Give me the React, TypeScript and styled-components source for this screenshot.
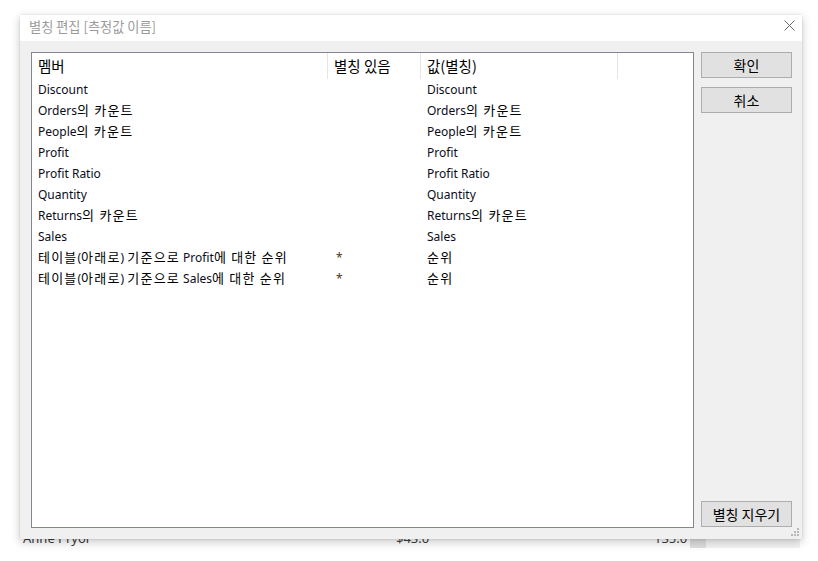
import React from 'react'
import styled, { createGlobalStyle } from 'styled-components'

const GlobalStyle = createGlobalStyle`
  html, body {
    margin: 0;
    padding: 0;
    background: #ffffff;
  }
  body {
    font-family: "Noto Sans", "Noto Sans CJK KR", sans-serif;
    -webkit-font-smoothing: antialiased;
  }
`

type Row = { member: string; aliased: boolean; value: string }

const rows: Row[] = [
  { member: 'Discount', aliased: false, value: 'Discount' },
  { member: 'Orders의 카운트', aliased: false, value: 'Orders의 카운트' },
  { member: 'People의 카운트', aliased: false, value: 'People의 카운트' },
  { member: 'Profit', aliased: false, value: 'Profit' },
  { member: 'Profit Ratio', aliased: false, value: 'Profit Ratio' },
  { member: 'Quantity', aliased: false, value: 'Quantity' },
  { member: 'Returns의 카운트', aliased: false, value: 'Returns의 카운트' },
  { member: 'Sales', aliased: false, value: 'Sales' },
  { member: '테이블(아래로) 기준으로 Profit에 대한 순위', aliased: true, value: '순위' },
  { member: '테이블(아래로) 기준으로 Sales에 대한 순위', aliased: true, value: '순위' },
]

const columns = [
  { label: '멤버', width: 296 },
  { label: '별칭 있음', width: 93 },
  { label: '값(별칭)', width: 197 },
]

// Malgun Gothic draws Hangul larger than Latin; wrap Hangul runs so they get their own size
const Mixed = ({ text }: { text: string }) => {
  const parts = text.split(/([\uac00-\ud7a3]+(?: [\uac00-\ud7a3]+)*)/)
  return (
    <>
      {parts.map((p, i) =>
        /[\uac00-\ud7a3]/.test(p) ? <Hangul key={i}>{p}</Hangul> : <React.Fragment key={i}>{p}</React.Fragment>
      )}
    </>
  )
}

export default function App() {
  return (
    <>
      <GlobalStyle />
      <Desktop>
        <Backdrop>
          <BackRow>
            <BackCell $width={373}>Anne Pryor</BackCell>
            <BackCell $width={258}>$43.0</BackCell>
            <BackCell $width={36}>135.0</BackCell>
            <ScrollThumb />
            <ScrollTrack />
          </BackRow>
        </Backdrop>

        <Dialog>
          <TitleBar>
            <Title>별칭 편집 [측정값 이름]</Title>
            <CloseButton aria-label="닫기">
              <svg width="11" height="11" viewBox="0 0 11 11">
                <path d="M0.5 0.5 L10.5 10.5 M10.5 0.5 L0.5 10.5" stroke="#6a6a6a" strokeWidth="1" fill="none" />
              </svg>
            </CloseButton>
          </TitleBar>

          <Body>
            <ListBox>
              <HeaderRow>
                {columns.map((c) => (
                  <HeaderCell key={c.label} $width={c.width}>
                    {c.label}
                  </HeaderCell>
                ))}
              </HeaderRow>
              {rows.map((r) => (
                <DataRow key={r.member}>
                  <Cell $width={columns[0].width}>
                    <Mixed text={r.member} />
                  </Cell>
                  <Cell $width={columns[1].width}>{r.aliased ? <Star>*</Star> : null}</Cell>
                  <Cell $width={columns[2].width}>
                    <Mixed text={r.value} />
                  </Cell>
                </DataRow>
              ))}
            </ListBox>

            <ButtonColumn>
              <Button>확인</Button>
              <Button>취소</Button>
              <Spacer />
              <Button $last>별칭 지우기</Button>
            </ButtonColumn>
          </Body>

          <Grip>
            <svg width="8" height="8" viewBox="0 0 8 8">
              <rect x="6" y="0" width="2" height="2" fill="#b8b8b8" />
              <rect x="3" y="3" width="2" height="2" fill="#b8b8b8" />
              <rect x="6" y="3" width="2" height="2" fill="#b8b8b8" />
              <rect x="0" y="6" width="2" height="2" fill="#b8b8b8" />
              <rect x="3" y="6" width="2" height="2" fill="#b8b8b8" />
              <rect x="6" y="6" width="2" height="2" fill="#b8b8b8" />
            </svg>
          </Grip>
        </Dialog>
      </Desktop>
    </>
  )
}

const Desktop = styled.div`
  position: relative;
  width: 818px;
  height: 561px;
  overflow: hidden;
  background: #ffffff;
`

const Backdrop = styled.div`
  height: 100%;
  display: flex;
  flex-direction: column;
  justify-content: flex-end;
  padding: 0 0 13px 23px;
  box-sizing: border-box;
`

const BackRow = styled.div`
  display: flex;
  align-items: flex-start;
  height: 16px;
  font-size: 13px;
  line-height: 12px;
  color: #3a3a3a;
`

const BackCell = styled.div<{ $width: number }>`
  width: ${(p) => p.$width}px;
  white-space: nowrap;
`

const ScrollThumb = styled.div`
  width: 16px;
  height: 16px;
  background: #dedede;
`

const ScrollTrack = styled.div`
  width: 94px;
  height: 16px;
  background: #f3f3f3;
`

const Dialog = styled.div`
  position: absolute;
  left: 20px;
  top: 15px;
  width: 782px;
  height: 524px;
  display: flex;
  flex-direction: column;
  background: #f0f0f0;
  box-shadow: 0 3px 9px rgba(0, 0, 0, 0.22), 0 0 2px rgba(0, 0, 0, 0.12);
`

const TitleBar = styled.div`
  height: 26px;
  flex: none;
  display: flex;
  align-items: center;
  justify-content: space-between;
  padding: 0 7px 0 9px;
  background: #ffffff;
`

const Title = styled.div`
  font-family: "Noto Sans CJK KR", sans-serif;
  font-size: 13.2px;
  line-height: 16px;
  color: #9a9a9a;
  margin-top: -3px;
`

const CloseButton = styled.div`
  width: 11px;
  height: 11px;
  display: flex;
  margin-top: -6px;
`

const Body = styled.div`
  flex: 1;
  display: flex;
  gap: 7px;
  padding: 11px 10px 11px 11px;
  min-height: 0;
`

const ListBox = styled.div`
  flex: 1;
  background: #ffffff;
  border: 1px solid #828790;
  overflow: hidden;
`

const HeaderRow = styled.div`
  display: flex;
  height: 26px;
`

const HeaderCell = styled.div<{ $width: number }>`
  width: ${(p) => p.$width}px;
  box-sizing: border-box;
  padding: 3px 0 0 6px;
  border-right: 1px solid #e5e5e5;
  font-family: "Noto Sans CJK KR", sans-serif;
  font-size: 14.5px;
  line-height: 20px;
  color: #000000;
  white-space: nowrap;
`

const DataRow = styled.div`
  display: flex;
  height: 21px;
  align-items: center;
`

const Cell = styled.div<{ $width: number }>`
  width: ${(p) => p.$width}px;
  height: 21px;
  box-sizing: border-box;
  padding-left: 6px;
  font-size: 12px;
  line-height: 21px;
  color: #0c0c1a;
  white-space: nowrap;
`

const Hangul = styled.span`
  font-family: "Noto Sans CJK KR", sans-serif;
  font-size: 13px;
  letter-spacing: 1.2px;
  line-height: 1;
  color: #000000;
`

const Star = styled.span`
  padding-left: 2px;
  color: #4a3a20;
`

const ButtonColumn = styled.div`
  width: 91px;
  display: flex;
  flex-direction: column;
  gap: 9px;
`

const Spacer = styled.div`
  flex: 1;
`

const Button = styled.div<{ $last?: boolean }>`
  height: 26px;
  box-sizing: border-box;
  display: flex;
  align-items: center;
  justify-content: center;
  background: #e1e1e1;
  border: 1px solid #adadad;
  font-family: "Noto Sans CJK KR", sans-serif;
  font-size: 14px;
  color: #000000;
  margin-bottom: ${(p) => (p.$last ? '1px' : '0')};
`

const Grip = styled.div`
  position: absolute;
  right: 3px;
  bottom: 3px;
  width: 8px;
  height: 8px;
  display: flex;
`
